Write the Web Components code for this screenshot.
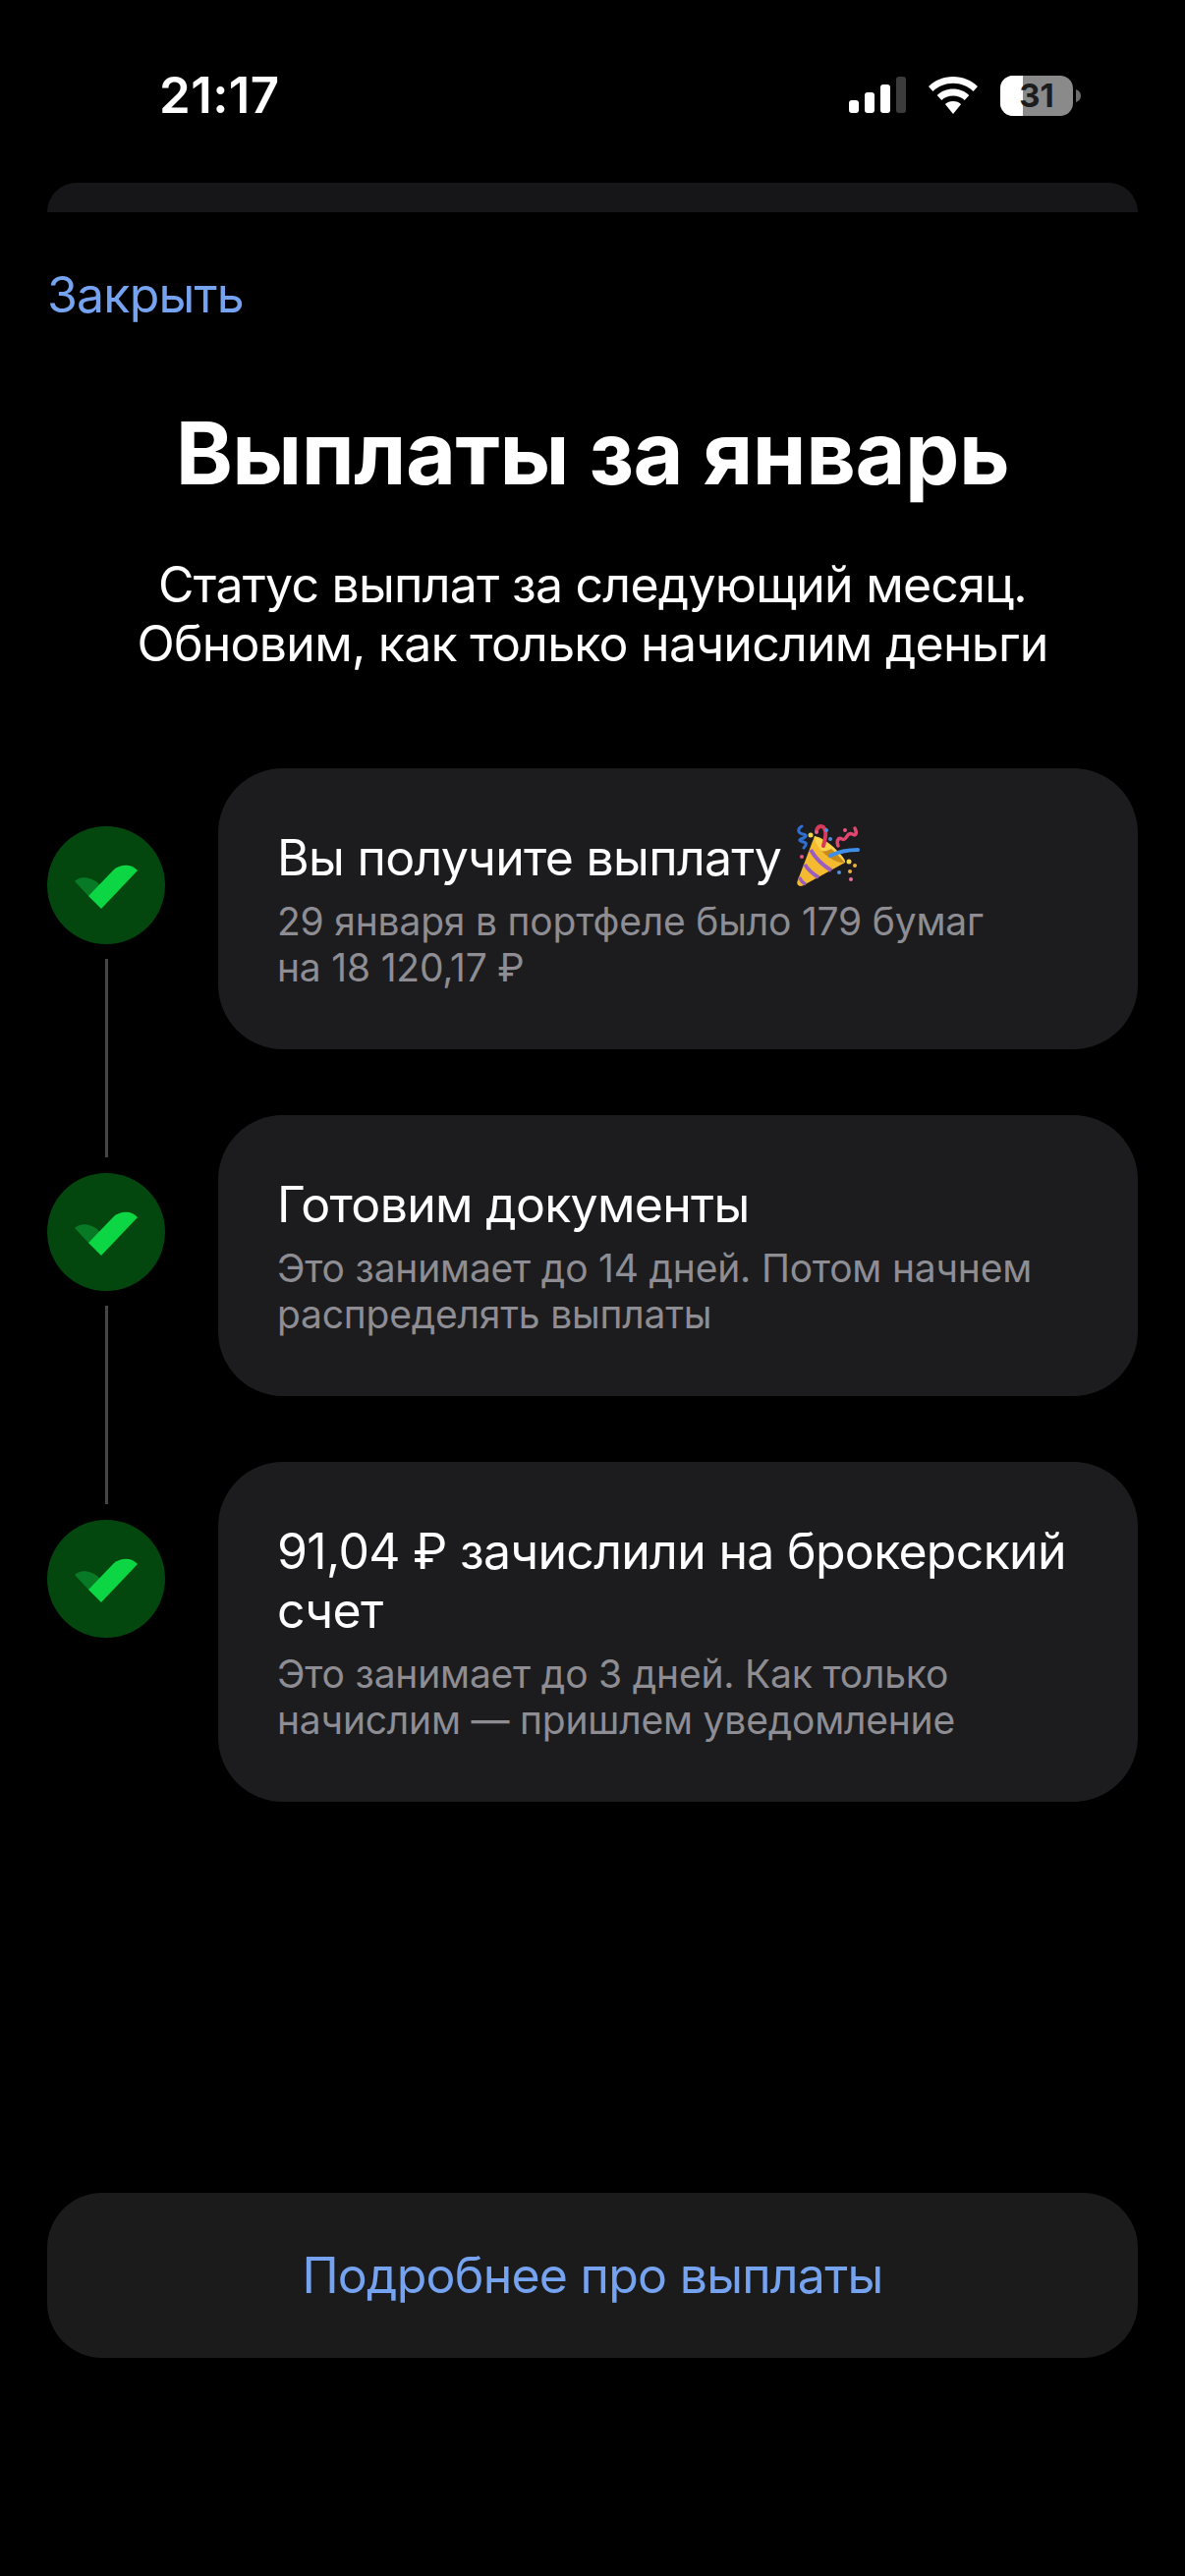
<!DOCTYPE html>
<html lang="ru">
<head>
<meta charset="utf-8">
<title>Выплаты за январь</title>
<style>
  html, body { margin: 0; padding: 0; background: #000; }
  body { font-family: Inter, "Noto Sans", sans-serif; color: #fff; }
</style>
</head>
<body>
<pay-app>
  <pay-status-bar time="21:17" battery="31"></pay-status-bar>
  <pay-sheet-peek></pay-sheet-peek>
  <pay-close>Закрыть</pay-close>
  <pay-header heading="Выплаты за январь">Статус выплат за следующий месяц.<br>Обновим, как только начислим деньги</pay-header>
  <pay-steps>
    <pay-step>
      <span slot="title">Вы получите выплату <pay-popper></pay-popper></span>
      29 января в портфеле было 179 бумаг<br>на 18 120,17 ₽
    </pay-step>
    <pay-step>
      <span slot="title">Готовим документы</span>
      Это занимает до 14 дней. Потом начнем<br>распределять выплаты
    </pay-step>
    <pay-step last>
      <span slot="title">91,04 ₽ зачислили на брокерский<br>счет</span>
      Это занимает до 3 дней. Как только<br>начислим — пришлем уведомление
    </pay-step>
  </pay-steps>
  <pay-button>Подробнее про выплаты</pay-button>
</pay-app>

<script>
class PayApp extends HTMLElement {
  constructor(){
    super();
    this.attachShadow({mode:"open"});
    this.shadowRoot.innerHTML = `
      <style>
        :host { display: flex; flex-direction: column; height: 2622px; box-sizing: border-box; padding: 0 48px; background: #000; overflow: hidden; }
      </style>
      <slot></slot>
    `;
  }
}

class PayStatusBar extends HTMLElement {
  constructor(){
    super();
    this.attachShadow({mode:"open"});
  }
  connectedCallback(){
    const time = this.getAttribute("time");
    const battery = this.getAttribute("battery");
    this.shadowRoot.innerHTML = `
      <style>
        :host { display: flex; align-items: center; justify-content: space-between; height: 38px; margin: 78px 0 70px; padding: 0 58px 0 114px; }
        .time { font-size: 51px; font-weight: 600; letter-spacing: 0.400px; line-height: 38px; }
        .icons { display: flex; align-items: center; gap: 22px; }
        svg { display: block; }
        .battery { position: relative; width: 82px; height: 41px; }
        .battery span { position: absolute; left: 0; width: 74px; top: 0; line-height: 41px; text-align: center; font-size: 33px; font-weight: 700; color: #1c1c1c; }
      </style>
      <div class="time">${time}</div>
      <div class="icons">
        <svg width="58" height="38" viewBox="0 0 58 38">
          <rect x="0" y="24" width="10" height="13" rx="3" fill="#fff"/>
          <rect x="16" y="16" width="10" height="21" rx="3" fill="#fff"/>
          <rect x="32" y="8" width="10" height="29" rx="3" fill="#fff"/>
          <rect x="48" y="0" width="10" height="37" rx="3" fill="#3c3c3c"/>
        </svg>
        <svg width="52" height="38" viewBox="0 0 52 38">
          <path d="M26 0C16 0 7.500 3.800 1 10l4.500 5C11 9.800 18 6.800 26 6.800S41 9.800 46.500 15L51 10C44.500 3.800 36 0 26 0Z" fill="#fff"/>
          <path d="M26 12.500c-6.500 0-12 2.400-16.300 6.400l4.600 5c3-2.800 7-4.500 11.700-4.500s8.700 1.700 11.700 4.500l4.600-5C38 14.900 32.500 12.500 26 12.500Z" fill="#fff"/>
          <path d="M26 25c-3.300 0-6 1.100-8.100 3L26 38l8.100-10C32 26.100 29.300 25 26 25Z" fill="#fff"/>
        </svg>
        <div class="battery">
          <svg width="82" height="41" viewBox="0 0 82 41">
            <defs><clipPath id="b"><rect width="74" height="41" rx="13"/></clipPath></defs>
            <g clip-path="url(#b)">
              <rect width="74" height="41" fill="#8a8a8a"/>
              <rect width="23" height="41" fill="#fff"/>
            </g>
            <path d="M77 14c3 1 5 3.500 5 6.500S80 26 77 27Z" fill="#6b6b6b"/>
          </svg>
          <span>${battery}</span>
        </div>
      </div>
    `;
  }
}

class PaySheetPeek extends HTMLElement {
  constructor(){
    super();
    this.attachShadow({mode:"open"});
    this.shadowRoot.innerHTML = `
      <style>
        :host { display: block; height: 30px; background: #161618; border-radius: 30px 30px 0 0; }
      </style>
    `;
  }
}

class PayClose extends HTMLElement {
  constructor(){
    super();
    this.attachShadow({mode:"open"});
    this.shadowRoot.innerHTML = `
      <style>
        :host { display: block; margin-top: 54px; font-size: 50px; line-height: 60px; color: #75a3f0; letter-spacing: -0.800px; }
      </style>
      <slot></slot>
    `;
  }
}

class PayHeader extends HTMLElement {
  constructor(){
    super();
    this.attachShadow({mode:"open"});
  }
  connectedCallback(){
    this.shadowRoot.innerHTML = `
      <style>
        :host { display: block; text-align: center; margin-top: 79px; }
        h1 { margin: 0; font-size: 88px; line-height: 104px; font-weight: 700; letter-spacing: -0.500px; }
        p { margin: 52px 0 0; font-size: 50px; line-height: 60px; letter-spacing: -0.750px; }
      </style>
      <h1>${this.getAttribute("heading")}</h1>
      <p><slot></slot></p>
    `;
  }
}

class PaySteps extends HTMLElement {
  constructor(){
    super();
    this.attachShadow({mode:"open"});
    this.shadowRoot.innerHTML = `
      <style>
        :host { display: flex; flex-direction: column; margin-top: 97px; flex: 1; }
      </style>
      <slot></slot>
    `;
  }
}

class PayCheck extends HTMLElement {
  constructor(){
    super();
    this.attachShadow({mode:"open"});
    this.shadowRoot.innerHTML = `
      <style>
        :host { display: block; width: 120px; height: 120px; flex: none; }
        svg { display: block; }
      </style>
      <svg width="120" height="120" viewBox="0 0 120 120">
        <circle cx="60" cy="60" r="60" fill="#03470f"/>
        <path d="M28 56C33 51.500 43 49.500 54 60L42 71Z" fill="#087a26"/>
        <path d="M42 71L68 44C74 38.500 86 37.500 92 45L55 84Z" fill="#0cd643"/>
      </svg>
    `;
  }
}

class PayStep extends HTMLElement {
  constructor(){
    super();
    this.attachShadow({mode:"open"});
  }
  connectedCallback(){
    const line = this.hasAttribute("last") ? "" : `<div class="line"></div>`;
    this.shadowRoot.innerHTML = `
      <style>
        :host { display: flex; gap: 54px; padding-bottom: 67px; }
        .marker { display: flex; flex-direction: column; align-items: center; width: 120px; flex: none; padding-top: 59px; }
        .line { flex: 1; width: 3px; background: #454547; margin: 15px 0 -110px; }
        .card { flex: 1; background: #1c1c1e; border-radius: 66px; padding: 61px 60px 60px; }
        .title { font-size: 50px; line-height: 60px; letter-spacing: -0.700px; color: #fff; }
        .sub { margin-top: 12px; font-size: 39px; line-height: 46.500px; color: #8d8d93; letter-spacing: -0.200px; }
      </style>
      <div class="marker"><pay-check></pay-check>${line}</div>
      <div class="card">
        <div class="title"><slot name="title"></slot></div>
        <div class="sub"><slot></slot></div>
      </div>
    `;
  }
}

class PayPopper extends HTMLElement {
  constructor(){
    super();
    this.attachShadow({mode:"open"});
    this.shadowRoot.innerHTML = `
      <style>
        /* los margenes negativos evitan que el emoji agrande la linea */
        :host { display: inline-block; width: 67px; height: 64px; margin: -14px 0; vertical-align: 2px; }
        svg { display: block; }
      </style>
      <svg width="67" height="64" viewBox="0 0 67 64">
        <path d="M20 12L51 39L8 62.500C4 64 1.500 61.500 2.500 58Z" fill="#f4bb30"/>
        <path d="M20 12C27 13 37 20 44 28C49 33 52 37 51 39C44 40 34 35 27 27C22 21 19 15 20 12Z" fill="#fbd24c"/>
        <path d="M27 27C34 35 44 40 51 39C48 36 43 30 37 25C33 27 30 28 27 27Z" fill="#c98a1c"/>
        <path d="M16 26C21 35 29 42 37 47" stroke="#9c5cc0" stroke-width="4" fill="none"/>
        <path d="M10 41C14 47 19 51 24 54" stroke="#9c5cc0" stroke-width="4" fill="none"/>
        <path d="M4.500 54C6 57 8.500 60 11 61" stroke="#9c5cc0" stroke-width="3.500" fill="none"/>
        <path d="M7 2C2 5 3 9 8 10C14 11 10 14 6 15C2 17 10 18 11 19C12 21 10 23 9 24" stroke="#2e6fd0" stroke-width="3" fill="none" stroke-linecap="round"/>
        <path d="M22 6C24 1 29 0 31 7C32 12 30 18 29 22" stroke="#d83a5c" stroke-width="4" fill="none" stroke-linecap="round"/>
        <path d="M44 22C42 17 44 13 48 15C52 17 52 12 55 10C58 8 60 13 62 10C63 8 62 6 61 4" stroke="#e0466f" stroke-width="3.500" fill="none" stroke-linecap="round"/>
        <path d="M36 32C42 29 52 26 64 26" stroke="#3f8fe8" stroke-width="4" fill="none" stroke-linecap="round"/>
        <circle cx="16" cy="11" r="2.500" fill="#f5d84a"/>
        <circle cx="22" cy="8" r="2" fill="#e0648a"/>
        <circle cx="32" cy="6" r="2" fill="#4f8fdc"/>
        <circle cx="36" cy="15" r="2" fill="#4f8fdc"/>
        <circle cx="51" cy="6" r="2" fill="#e8557f"/>
        <circle cx="7" cy="33" r="2" fill="#e8557f"/>
        <circle cx="55" cy="38" r="2.500" fill="#f5d84a"/>
        <circle cx="61" cy="42" r="2" fill="#f0b040"/>
        <circle cx="56" cy="48" r="2" fill="#f0b040"/>
        <circle cx="45" cy="49" r="2" fill="#4f8fdc"/>
        <circle cx="57" cy="56" r="2" fill="#e8729a"/>
      </svg>
    `;
  }
}

class PayButton extends HTMLElement {
  constructor(){
    super();
    this.attachShadow({mode:"open"});
    this.shadowRoot.innerHTML = `
      <style>
        :host { display: flex; align-items: center; justify-content: center; height: 168px; margin-bottom: 222px; background: #1b1b1c; border-radius: 56px; font-size: 50px; letter-spacing: -0.750px; color: #75a3f0; }
      </style>
      <slot></slot>
    `;
  }
}

customElements.define("pay-app", PayApp);
customElements.define("pay-status-bar", PayStatusBar);
customElements.define("pay-sheet-peek", PaySheetPeek);
customElements.define("pay-close", PayClose);
customElements.define("pay-header", PayHeader);
customElements.define("pay-steps", PaySteps);
customElements.define("pay-check", PayCheck);
customElements.define("pay-step", PayStep);
customElements.define("pay-popper", PayPopper);
customElements.define("pay-button", PayButton);
</script>
</body>
</html>
